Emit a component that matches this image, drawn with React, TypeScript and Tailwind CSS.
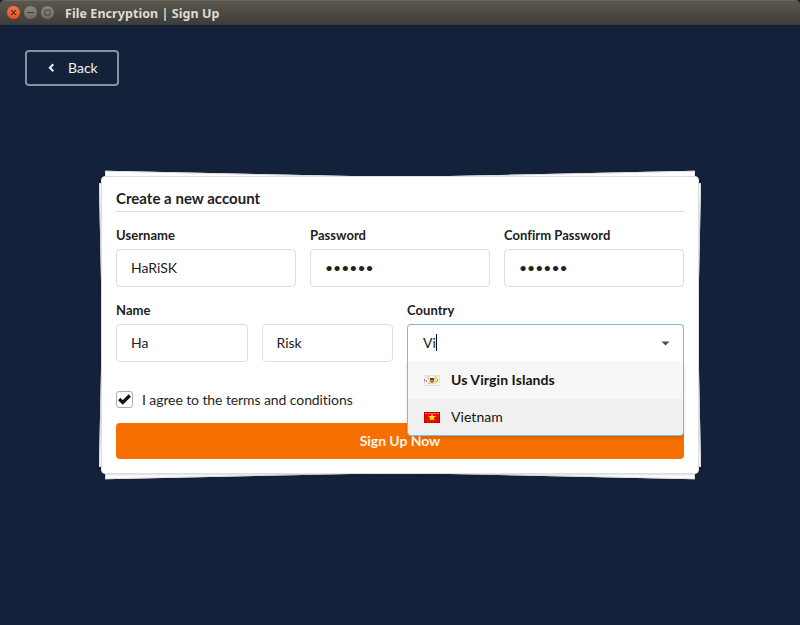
import React from "react";

const inputClass =
  "block h-[38px] w-full rounded border border-[#dedede] bg-white px-[14px] pb-[2px] text-sm text-[#212121] outline-none";

function Field({
  label,
  value,
  type = "text",
}: {
  label?: string;
  value: string;
  type?: string;
}) {
  return (
    <label className="block min-w-0 flex-1">
      {label && <Label text={label} />}
      <input type={type} defaultValue={value} className={inputClass} />
    </label>
  );
}

function Label({ text }: { text: string }) {
  return (
    <span className="mb-[5px] block h-[17px] text-[13px] leading-4 font-bold tracking-[0.04px] text-[#212121]">
      {text}
    </span>
  );
}

function TitleBar() {
  return (
    <div className="bg-[#14213a]">
      <header className="flex h-[25px] items-center rounded-t-[5px] border-t border-[#6b685e] bg-gradient-to-b from-[#5b584e] to-[#3d3c37] pl-[6px]">
        <svg width="50" height="16" viewBox="0 0 50 16" fill="none" className="shrink-0">
          <defs>
            <linearGradient id="close" x1="0" y1="0" x2="0" y2="1">
              <stop offset="0" stopColor="#f4794f" />
              <stop offset="1" stopColor="#e2501f" />
            </linearGradient>
            <linearGradient id="grey" x1="0" y1="0" x2="0" y2="1">
              <stop offset="0" stopColor="#8a887f" />
              <stop offset="1" stopColor="#6c6a63" />
            </linearGradient>
          </defs>
          <circle cx="7.5" cy="7.500" r="6.9" fill="url(#close)" stroke="#35332e" strokeWidth="0.5" />
          <path d="M5.200 5.200l4.600 4.600M9.800 5.200l-4.600 4.600" stroke="#4a2a1b" strokeWidth="1.1" />
          <circle cx="24.5" cy="7.500" r="6.9" fill="url(#grey)" stroke="#35332e" strokeWidth="0.5" />
          <path d="M21 7.500h7" stroke="#45433e" strokeWidth="1" />
          <circle cx="41.5" cy="7.500" r="6.9" fill="url(#grey)" stroke="#35332e" strokeWidth="0.5" />
          <rect x="39" y="5" width="5" height="5" stroke="#4a4842" strokeWidth="1" />
        </svg>
        <h1 className="mt-[2px] ml-[9px] font-['Noto_Sans',sans-serif] text-[12.5px] leading-none font-bold tracking-[0.06px] whitespace-nowrap text-[#dfdbd2]">
          File Encryption | Sign Up
        </h1>
      </header>
    </div>
  );
}

function VirginIslandsFlag() {
  return (
    <svg width="16" height="11" viewBox="0 0 16 11">
      <rect x=".5" y=".5" width="15" height="10" fill="#f8f8f8" stroke="#e0e0e0" />
      <path d="M2 1h3l2 2h2l2-2h3l-1 3-1 1v2l1 2h-3L8 8.500 5.500 9H4l1-2V5L3 4z" fill="#ece84f" />
      <path d="M6 4h4v3L8 8.500 6 7z" fill="#c86a92" />
      <path d="M6 3h4v2H6z" fill="#4438b8" />
      <path d="M.5 4v2.500M2.500 5v2M13.500 4v2.500M12.500 6v1" stroke="#7f7de0" />
      <path d="M4 7.500l1.500 1" stroke="#8cc05c" />
    </svg>
  );
}

function VietnamFlag() {
  return (
    <svg width="16" height="11" viewBox="0 0 16 11">
      <rect width="16" height="11" fill="#c80000" />
      <rect x="1" y="1" width="14" height="9" fill="#f00505" />
      <path d="M1 1.500h14" stroke="#ff5252" />
      <path d="M8 1.500l1 2.500 2.800.1-2.100 1.800.8 2.900L8 7.300 5.500 8.800l.8-2.900-2.100-1.800L7 4z" fill="#fff200" />
    </svg>
  );
}

function CountrySelect() {
  return (
    <div className="relative w-[277px]">
      <Label text="Country" />
      <div className="flex h-[38px] items-center rounded-t border border-b-0 border-[#85b7d9] bg-white pr-[13px] pl-[15px] text-sm text-[#212121]">
        <span className="mb-[2px]">Vi</span>
        <span className="mb-[2px] h-[17px] w-px bg-black" />
        <svg width="9" height="5" viewBox="0 0 9 5" className="ml-auto">
          <path d="M.5.500h8L4.500 4.500z" fill="#4b4b4b" />
        </svg>
      </div>
      <ul className="absolute top-[59px] left-0 z-10 w-full overflow-hidden rounded-b border border-t-0 border-[#85b7d9] text-sm text-[#141414] shadow-[0_2px_3px_rgba(34,36,38,0.15)]">
        <li className="flex h-[38px] items-center gap-[11px] bg-[#f7f7f7] pl-4 font-bold tracking-[0.08px]">
          <VirginIslandsFlag />
          Us Virgin Islands
        </li>
        <li className="flex h-9 items-center gap-[11px] bg-[#f0f0f0] pl-4 tracking-[0.05px]">
          <VietnamFlag />
          Vietnam
        </li>
      </ul>
    </div>
  );
}

const sheetClass =
  "absolute inset-px border border-[#dedede] bg-white shadow-[0_1px_2px_rgba(34,36,38,0.15)]";

export default function App() {
  return (
    <div className="h-[625px] w-[800px] overflow-hidden bg-[#14213a] font-[Lato,sans-serif]">
      <TitleBar />
      <main className="pt-[25px]">
        <button className="ml-[25px] flex h-9 w-[94px] items-center rounded border-2 border-[#8990a0] pl-[21px] text-sm text-[#f0f1f4]">
          <svg width="8" height="10" viewBox="0 0 8 10" fill="none" className="mr-[12px]">
            <path d="M5.300 1.300L1.900 4.800l3.400 3.500" stroke="#e2e4e9" strokeWidth="2.200" />
          </svg>
          Back
        </button>

        <div className="relative isolate mt-[90px] ml-[101px] h-[298px] w-[598px]">
          <div className={`${sheetClass} -rotate-[1.2deg]`} />
          <div className={`${sheetClass} rotate-[1.2deg]`} />
          <form className="relative flex h-full flex-col rounded border border-[#dedede] bg-white px-[14px] pt-[11px] shadow-[0_1px_2px_rgba(34,36,38,0.15)]">
            <h2 className="h-[24px] border-b border-[#dedede] text-[15px] leading-[20px] font-bold tracking-[0.02px] text-[#212121]">
              Create a new account
            </h2>
            <div className="mt-[15px] flex gap-[14px]">
              <Field label="Username" value="HaRiSK" />
              <Field label="Password" value="secret" type="password" />
              <Field label="Confirm Password" value="secret" type="password" />
            </div>
            <div className="mt-[15px] flex justify-between">
              <div className="w-[277px]">
                <Label text="Name" />
                <div className="flex gap-[14px]">
                  <Field value="Ha" />
                  <Field value="Risk" />
                </div>
              </div>
              <CountrySelect />
            </div>
            <div className="mt-[29px] flex h-[17px] items-center text-sm tracking-[-0.09px] text-[#262626]">
              <span className="mr-[9px] flex size-[17px] items-center justify-center rounded-[3px] border border-[#adadad] bg-white">
                <svg width="13" height="11" viewBox="0 0 13 11" fill="none">
                  <path d="M1.200 5l3.600 3.500 7-7" stroke="#141414" strokeWidth="3.200" />
                </svg>
              </span>
              I agree to the terms and conditions
            </div>
            <button
              type="button"
              className="mt-[15px] h-9 w-full rounded bg-[#f76f00] text-sm font-bold tracking-[-0.05px] text-[#fff4e8]"
            >
              Sign Up Now
            </button>
          </form>
        </div>
      </main>
    </div>
  );
}
